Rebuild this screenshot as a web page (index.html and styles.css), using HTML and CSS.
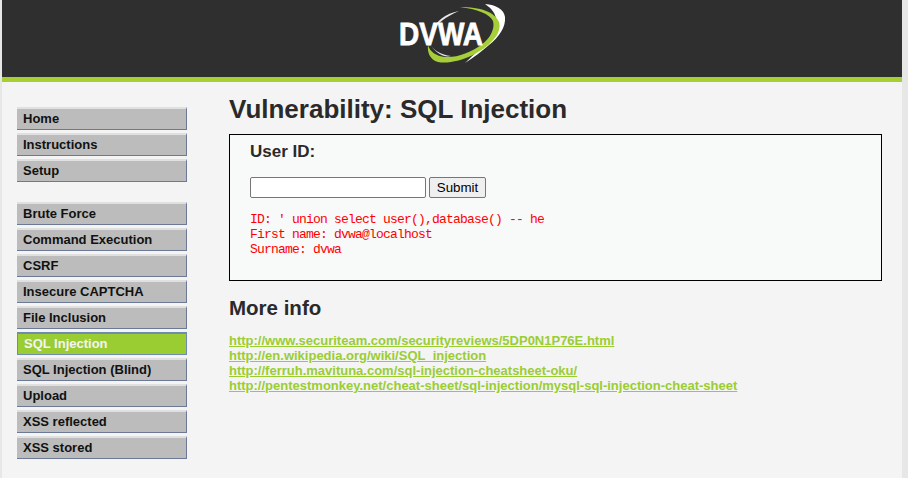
FILE: index.html
```html
<!DOCTYPE html>
<html lang="en">
<head>
<meta charset="utf-8">
<title>Vulnerability: SQL Injection</title>
<link rel="stylesheet" href="styles.css">
</head>
<body>
<div class="container">
  <header class="header">
    <svg class="logo" width="115" height="70" viewBox="0 0 115 70" aria-label="DVWA logo">
      <path class="swoosh-white" d="M90 4 C101 5 109 9 110 17 C111 27 104 37 94 45 C86 52 78 58 70 63 C79 54 90 45 96 36 C103 26 105 14 90 4 Z"/>
      <path class="swoosh-green" d="M65 7 C85 7 100 12 104 22 C107 32 98 44 80 54 C66 61 52 64 43 62 C35 60 32 52 33 45 C35 52 41 56 50 57 C62 58 76 52 86 45 C96 38 100 28 98 21 C95 14 82 9 65 7 Z"/>
      <path class="swoosh-thin" d="M64 11 C50 14 42 20 38 30 C42 24 50 17 64 11 Z"/>
      <path class="swoosh-thin" d="M34 43 C38 50 46 55 56 56 C48 58 40 52 34 43 Z"/>
      <text class="logo-text" x="4" y="45" textLength="84" lengthAdjust="spacingAndGlyphs">DVWA</text>
    </svg>
  </header>
  <div class="accent"></div>
  <div class="main">
    <nav class="menu">
      <ul class="menu-group">
        <li class="menu-item">Home</li>
        <li class="menu-item">Instructions</li>
        <li class="menu-item">Setup</li>
      </ul>
      <ul class="menu-group">
        <li class="menu-item">Brute Force</li>
        <li class="menu-item">Command Execution</li>
        <li class="menu-item">CSRF</li>
        <li class="menu-item">Insecure CAPTCHA</li>
        <li class="menu-item">File Inclusion</li>
        <li class="menu-item menu-item-active">SQL Injection</li>
        <li class="menu-item">SQL Injection (Blind)</li>
        <li class="menu-item">Upload</li>
        <li class="menu-item">XSS reflected</li>
        <li class="menu-item">XSS stored</li>
      </ul>
    </nav>
    <main class="content">
      <h1 class="title">Vulnerability: SQL Injection</h1>
      <section class="box">
        <h3 class="box-title">User ID:</h3>
        <form class="form">
          <input class="field" type="text">
          <button class="submit" type="button">Submit</button>
        </form>
        <pre class="result">ID: ' union select user(),database() -- he
First name: dvwa@localhost
Surname: dvwa</pre>
      </section>
      <h2 class="more">More info</h2>
      <ul class="links">
        <li><a href="#">http://www.securiteam.com/securityreviews/5DP0N1P76E.html</a></li>
        <li><a href="#">http://en.wikipedia.org/wiki/SQL_injection</a></li>
        <li><a href="#">http://ferruh.mavituna.com/sql-injection-cheatsheet-oku/</a></li>
        <li><a href="#">http://pentestmonkey.net/cheat-sheet/sql-injection/mysql-sql-injection-cheat-sheet</a></li>
      </ul>
    </main>
  </div>
</div>
</body>
</html>
```
FILE: styles.css
```css
* { box-sizing: border-box; }
html, body { height: 100%; }
body {
  margin: 0;
  background: #e7e7e7;
  color: #000;
  font-family: "Liberation Sans", Arial, sans-serif;
  overflow: hidden;
}
.container {
  width: 900px;
  height: 478px;
  margin-left: 2px;
  background: #f4f4f4;
}
.header {
  height: 77px;
  background: #2f2f2f;
  display: flex;
  justify-content: center;
}
.logo { margin-left: 1px; display: block; }
.logo-text {
  font-family: "Liberation Sans", Arial, sans-serif;
  font-weight: 700;
  font-size: 32px;
  fill: #fff;
  stroke: #fff;
  stroke-width: 0.8px;
}
.swoosh-green { fill: #a6ce39; }
.swoosh-white { fill: #fff; }
.swoosh-thin { fill: #e8e8e8; }
.accent { height: 5px; background: #a6d032; }
.main { display: flex; }
.menu {
  width: 170px;
  margin: 25px 0 0 15px;
  flex: none;
}
.menu-group {
  list-style: none;
  margin: 0 0 20px;
  padding: 0;
  display: flex;
  flex-direction: column;
  gap: 3px;
}
.menu-item {
  height: 23px;
  padding-left: 6px;
  background: #bcbcbc;
  border-top: 2px solid #e0e0e0;
  border-right: 1px solid #6c7a96;
  border-bottom: 1px solid #6c7a96;
  font-size: 13px;
  font-weight: 700;
  line-height: 19px;
  color: #111;
}
.menu-item-active {
  background: #9acd32;
  border: 1px solid #6f8bb0;
  border-top-width: 2px;
  color: #f4f4f4;
}
.content {
  margin-left: 42px;
  width: 653px;
  flex: none;
}
.title {
  margin: 12px 0 0;
  font-size: 26px;
  line-height: 30px;
  font-weight: 700;
  color: #2a2a2a;
}
.box {
  margin-top: 10px;
  height: 147px;
  padding: 7px 20px;
  background: #f8f9f9;
  border: 1px solid #000;
}
.box-title {
  margin: 0;
  font-size: 17px;
  line-height: 20px;
  font-weight: 700;
  color: #2a2a2a;
}
.form {
  margin-top: 15px;
  display: flex;
  align-items: center;
  gap: 3px;
}
.field {
  width: 176px;
  height: 21px;
  padding: 1px 2px;
  margin: 0;
  border: 1px solid #767676;
  border-radius: 2px;
  background: #fff;
}
.submit {
  width: 57px;
  height: 21px;
  padding: 0;
  margin: 0;
  border: 1px solid #767676;
  border-radius: 2px;
  background: #efefef;
  font-family: "Liberation Sans", Arial, sans-serif;
  font-size: 13.33px;
  color: #000;
}
.result {
  margin: 14px 0 0;
  font-family: "Liberation Mono", "Courier New", monospace;
  font-size: 13px;
  letter-spacing: -0.8px;
  line-height: 15px;
  color: #f00;
}
.more {
  margin: 15px 0 0;
  font-size: 20.5px;
  line-height: 24px;
  font-weight: 700;
  color: #2a2a2a;
}
.links {
  list-style: none;
  margin: 13px 0 0;
  padding: 0;
  font-size: 13px;
  line-height: 15px;
  font-weight: 700;
}
.links a { color: #9acd32; }
```
